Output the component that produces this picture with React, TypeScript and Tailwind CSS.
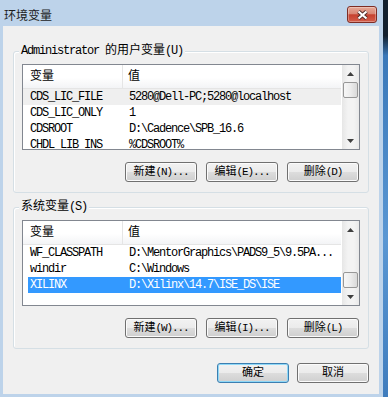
import type { ReactNode } from 'react';

type Row = [string, string];

const userVars: Row[] = [
  ['CDS_LIC_FILE', '5280@Dell-PC;5280@localhost'],
  ['CDS_LIC_ONLY', '1'],
  ['CDSROOT', 'D:\\Cadence\\SPB_16.6'],
  ['CHDL_LIB_INS', '%CDSROOT%'],
];

const systemVars: Row[] = [
  ['WF_CLASSPATH', 'D:\\MentorGraphics\\PADS9_5\\9.5PA...'],
  ['windir', 'C:\\Windows'],
  ['XILINX', 'D:\\Xilinx\\14.7\\ISE_DS\\ISE'],
];

const CJK_RUN = /([\u2E80-\u9FFF\uFF00-\uFFEF]+)/;

// SimSun look: latin squeezed into narrow mono cells, CJK kept full width
function Txt({ s }: { s: string }) {
  return (
    <>
      {s.split(CJK_RUN).map((part, i) =>
        i % 2 === 1 ? (
          <span key={i} className="tracking-normal">
            {part}
          </span>
        ) : (
          part
        )
      )}
    </>
  );
}

function Arrow({ down }: { down?: boolean }) {
  return (
    <div className="flex h-[17px] items-center justify-center">
      <svg width="7" height="4" viewBox="0 0 7 4">
        <path d={down ? 'M0 0h7L3.5 4z' : 'M3.5 0 7 4H0z'} fill="#3f3f3f" />
      </svg>
    </div>
  );
}

function ScrollBar({ atBottom }: { atBottom?: boolean }) {
  return (
    <div className="flex w-[17px] flex-col bg-[linear-gradient(90deg,#e6e6e6,#f3f3f3_35%,#f3f3f3_70%,#e9e9e9)]">
      <Arrow />
      <div className={`flex flex-1 flex-col ${atBottom ? 'justify-end' : 'justify-start'}`}>
        <div className="mx-[1px] h-[16px] rounded-[2px] border border-[#979797] bg-[linear-gradient(90deg,#f7f7f7,#ececec_50%,#d9d9d9)]" />
      </div>
      <Arrow down />
    </div>
  );
}

function ListView({
  rows,
  hot,
  selected,
  atBottom,
}: {
  rows: Row[];
  hot?: number;
  selected?: number;
  atBottom?: boolean;
}) {
  return (
    <div className="flex h-[86px] border border-[#828790] bg-white tracking-[-1.2px]">
      <div className="min-w-0 flex-1 overflow-hidden pr-[1px]">
        <div className="flex h-[24px] border-b border-[#e5e5e5] bg-[linear-gradient(#ffffff_0%,#ffffff_55%,#f3f4f6_100%)]">
          <div className="flex w-[100px] items-center border-r border-[#e5e5e5] pl-[7px]">
            <Txt s="变量" />
          </div>
          <div className="flex items-center pl-[5px]">
            <Txt s="值" />
          </div>
        </div>
        {rows.map(([name, value], i) => {
          const sel = i === selected;
          return (
            <div
              key={name}
              className={`flex h-[16px] items-center whitespace-nowrap leading-[16px] ${
                sel
                  ? 'ml-[5px] bg-[#3399ff] text-white'
                  : i === hot
                    ? 'bg-[#efefef]'
                    : ''
              }`}
            >
              <div className={`overflow-hidden ${sel ? 'w-[95px] pl-[2px]' : 'w-[100px] pl-[7px]'}`}>
                {name}
              </div>
              <div className="min-w-0 flex-1 overflow-hidden pl-[6px]">{value}</div>
            </div>
          );
        })}
      </div>
      <ScrollBar atBottom={atBottom} />
    </div>
  );
}

function Button({ label, def }: { label: string; def?: boolean }) {
  return (
    <div
      className={`flex h-[20px] w-[72px] items-center justify-center rounded-[3px] border bg-[linear-gradient(#f2f2f2_0%,#ebebeb_50%,#dddddd_50%,#cfcfcf_100%)] text-[11px] tracking-[-1.1px] ${
        def
          ? 'border-[#3c7fb1] shadow-[inset_0_0_0_1px_#8fd8f7]'
          : 'border-[#707070] shadow-[inset_0_0_0_1px_#fbfbfb]'
      }`}
    >
      <Txt s={label} />
    </div>
  );
}

function GroupBox({ label, children }: { label: string; children: ReactNode }) {
  return (
    <div className="relative mx-[10px] rounded-[3px] border border-[#d5dfe5] px-[8px] pt-[12px] pb-[10px] shadow-[inset_1px_1px_0_#ffffff]">
      <span className="absolute -top-[8px] left-[5px] bg-[#f0f0f0] px-[2px] leading-[14px] tracking-[-1.2px]">
        <Txt s={label} />
      </span>
      {children}
    </div>
  );
}

function ButtonRow({ labels }: { labels: string[] }) {
  return (
    <div className="mt-[12px] flex justify-end gap-[9px] pr-[1px]">
      {labels.map((l) => (
        <Button key={l} label={l} />
      ))}
    </div>
  );
}

export default function App() {
  return (
    <div className="flex h-[397px] w-[388px] overflow-hidden font-['Liberation_Mono','Noto_Sans_CJK_SC',monospace] text-[12px] text-black">
      <div className="flex w-[383px] flex-col bg-[#bdd3ea] pr-[4px] pb-[3px] pl-[3px]">
        {/* title bar */}
        <div className="flex h-[26px] items-start pt-[6px]">
          <div className="pl-[1px] font-['Noto_Sans_CJK_SC',sans-serif] text-[12px] leading-[17px] text-[#1b1b1b]">
            环境变量
          </div>
          <div className="mr-[2px] ml-auto flex h-[17px] w-[30px] items-center justify-center rounded-[3px] border border-[#7e2d25] bg-[linear-gradient(#e6a999_0%,#d98674_45%,#c6412f_52%,#d35d4a_100%)] shadow-[inset_0_0_0_1px_rgba(255,255,255,0.3)]">
            <svg width="13" height="10" viewBox="0 0 13 10">
              <path d="M2.5 1.5 10.5 8.5M10.5 1.5 2.5 8.5" stroke="#4e2a27" strokeWidth="4" />
              <path d="M2.5 1.5 10.5 8.5M10.5 1.5 2.5 8.5" stroke="#ffffff" strokeWidth="2.2" />
            </svg>
          </div>
        </div>

        {/* client */}
        <div className="flex flex-1 flex-col bg-[#f0f0f0] pt-[25px]">
          <GroupBox label="Administrator 的用户变量(U)">
            <ListView rows={userVars} hot={0} />
            <ButtonRow labels={['新建(N)...', '编辑(E)...', '删除(D)']} />
          </GroupBox>

          <div className="mt-[14px]">
            <GroupBox label="系统变量(S)">
              <ListView rows={systemVars} selected={2} atBottom />
              <ButtonRow labels={['新建(W)...', '编辑(I)...', '删除(L)']} />
            </GroupBox>
          </div>

          <div className="mt-[14px] mr-[10px] flex justify-end gap-[8px]">
            <Button label="确定" def />
            <Button label="取消" />
          </div>
        </div>
      </div>
      <div className="w-[5px] bg-[linear-gradient(#13202e_0%,#13202e_9%,#3a78b9_14%,#5a97d3_60%,#3f7cbd_100%)]" />
    </div>
  );
}
